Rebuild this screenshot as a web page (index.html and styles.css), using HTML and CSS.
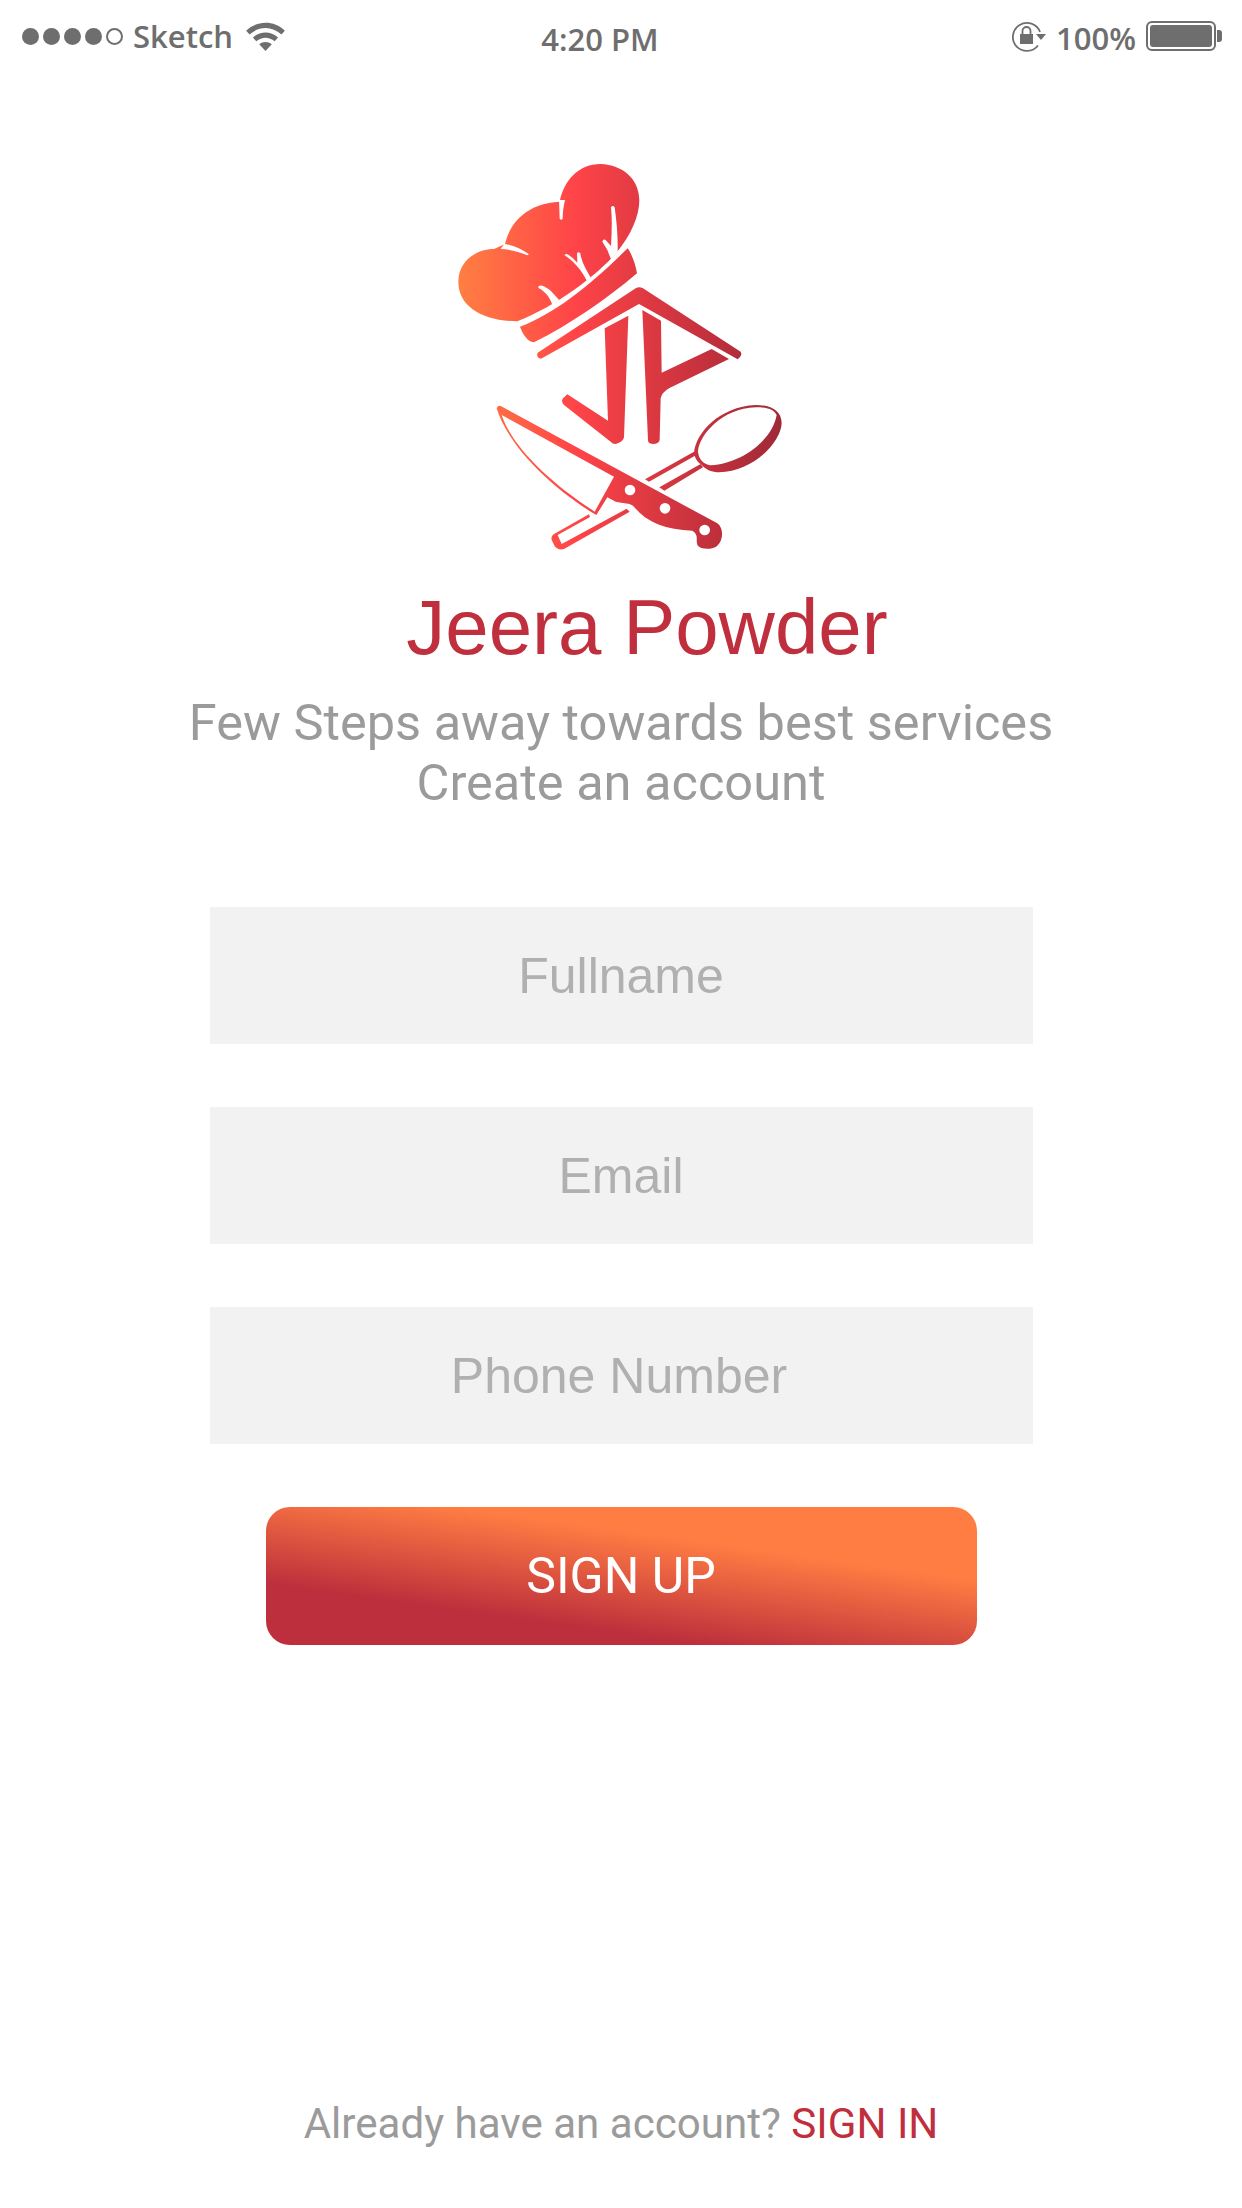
FILE: index.html
```html
<!DOCTYPE html>
<html lang="en">
<head>
<meta charset="utf-8">
<title>Jeera Powder</title>
<link rel="stylesheet" href="styles.css">
</head>
<body>
<div class="page">
  <header class="status">
    <div class="status-left">
      <div class="dots"><i></i><i></i><i></i><i></i><i class="off"></i></div>
      <span class="carrier">Sketch</span>
      <svg class="wifi" viewBox="0 0 40 30"><path d="M0 9C11-2 29-2 40 9l-3.500 4C27 4 13 4 3.500 13z M7 16c8-7 18-7 26 0l-3.500 4c-6-5-13-5-19 0z M13.500 23c4-3 9-3 13 0L20 30z" fill="#6e6e6e"/></svg>
    </div>
    <div class="status-time">4:20 PM</div>
    <div class="status-right">
      <svg class="lock" viewBox="0 0 38 32"><path d="M31 12A14 14 0 1 0 29 25.500" fill="none" stroke="#6e6e6e" stroke-width="1.800"/><path d="M27 14h10l-5 6z" fill="#6e6e6e"/><rect x="11" y="14" width="13" height="10" fill="#6e6e6e"/><path d="M13.500 14v-3a4 4 0 0 1 8 0v3" fill="none" stroke="#6e6e6e" stroke-width="1.800"/></svg>
      <span class="percent">100%</span>
      <div class="battery"><div class="battery-fill"></div></div>
      <div class="battery-nub"></div>
    </div>
  </header>

  <svg class="logo" viewBox="0 0 1080 1230">
    <defs>
      <linearGradient id="g1" gradientUnits="userSpaceOnUse" x1="50" y1="0" x2="1040" y2="0">
        <stop offset="0" stop-color="#ff8042"/>
        <stop offset=".36" stop-color="#ff4448"/>
        <stop offset=".8" stop-color="#bd2f3c"/>
        <stop offset="1" stop-color="#9c2a36"/>
      </linearGradient>
      <linearGradient id="g2" gradientUnits="userSpaceOnUse" x1="-70" y1="0" x2="920" y2="0">
        <stop offset="0" stop-color="#ff8042"/>
        <stop offset=".36" stop-color="#ff4448"/>
        <stop offset=".8" stop-color="#bd2f3c"/>
        <stop offset="1" stop-color="#9c2a36"/>
      </linearGradient>
    </defs>
    <path fill="url(#g1)" d="M235 514C130 512 58 470 58 395C58 335 110 297 165 297L198 282C215 210 270 160 362 155C375 90 420 42 485 42C550 45 600 85 601 150C601 200 575 255 535 305C480 370 360 465 235 514Z"/>
    <g fill="#fff">
      <path d="M196 281C225 287 250 298 270 313L265 316C240 305 215 298 185 297Z"/>
      <path d="M360 150L362 206Q366 212 371 206C371 190 373 170 378 150Z"/>
      <path d="M516 172Q521 164 527 172C533 215 537 260 536 305L516 328L505 300L490 275Q492 266 500 270L516 288C518 250 520 210 516 172Z"/>
      <path d="M376 315Q382 310 388 314C398 320 406 328 415 338L414 310Q418 303 424 310C426 330 440 358 455 382L445 395C428 360 405 335 376 315Z"/>
      <path d="M298 410Q302 405 310 407C330 413 348 435 360 450L340 465C335 445 318 423 298 414Z"/>
    </g>
    <path fill="url(#g1)" d="M243 530C350 490 460 400 566 295C580 315 590 345 594 370C500 450 390 525 285 577C265 575 250 550 243 530Z"/>
    <path fill="url(#g1)" d="M296 608L590 415Q600 408 612 415L905 605Q912 615 896 628L600 462L306 626Q290 622 296 608Z"/>
    <path fill="url(#g1)" d="M497 535L568 497L555 862Q553 876 530 882Q520 882 515 875L375 765Q365 755 372 745L385 733L507 812Z"/>
    <path fill="url(#g1)" d="M610 480L666 512L668 668L818 597L870 627L690 715Q668 728 665 745L662 870Q660 881 645 882Q626 882 627 870Z"/>
    <g transform="translate(120 690)">
      <path fill="url(#g2)" fill-rule="evenodd" d="M53 85Q55 75 65 78L715 430C735 445 733 480 715 497C700 510 665 510 655 495C650 475 660 465 640 452C560 450 500 425 465 380C455 368 430 370 410 365L385 352L352 405L343 400C200 310 85 190 53 85ZM68 105C100 200 210 305 347 395L405 290Z"/>
      <circle cx="453" cy="330" r="16" fill="#fff"/>
      <circle cx="558" cy="385" r="16" fill="#fff"/>
      <circle cx="677" cy="450" r="16" fill="#fff"/>
      <path fill="url(#g2)" fill-rule="evenodd" d="M645 218C650 160 720 80 830 75C880 75 908 95 908 130C905 190 820 275 720 277C700 277 680 270 665 252C655 245 648 235 645 218ZM657 215C660 238 672 252 695 256C790 250 880 180 893 105C885 90 870 82 830 82C730 85 660 165 657 215Z"/>
      <path fill="url(#g2)" d="M645 215L498 298L510 305L652 225Z"/>
      <path fill="url(#g2)" d="M541 322L665 252L672 262L556 332Z"/>
      <path fill="url(#g2)" d="M330 403L225 462Q215 470 218 480L228 500Q240 512 255 507L452 395L443 386L248 492L236 465L333 411Z"/>
    </g>
  </svg>

  <h1 class="title">Jeera Powder</h1>
  <p class="subtitle">Few Steps away towards best services<br>Create an account</p>

  <form class="form">
    <div class="field">Fullname</div>
    <div class="field">Email</div>
    <div class="field field-phone">Phone Number</div>
    <button class="signup" type="button">SIGN UP</button>
  </form>

  <footer class="footer">Already have an account? <a class="signin">SIGN IN</a></footer>
</div>
</body>
</html>
```
FILE: styles.css
```css
* { box-sizing: border-box; }
html, body { margin: 0; padding: 0; background: #fff; }
.page {
  width: 1242px;
  height: 2208px;
  display: flex;
  flex-direction: column;
  align-items: center;
  overflow: hidden;
}
.status {
  width: 100%;
  height: 76px;
  padding: 20px 20px 0 22px;
  display: grid;
  grid-template-columns: 1fr auto 1fr;
  align-items: start;
  font-family: "Open Sans", sans-serif;
  font-weight: 600;
  font-size: 31px;
  line-height: 32px;
  color: #6e6e6e;
}
.status-left, .status-right { display: flex; align-items: center; height: 32px; }
.status-right { justify-content: flex-end; }
.dots { display: flex; gap: 4px; }
.dots i { width: 17px; height: 17px; border-radius: 50%; background: #6e6e6e; }
.dots i.off { background: none; border: 2px solid #6e6e6e; }
.carrier { margin-left: 10px; }
.wifi { width: 39px; height: 29px; margin-left: 13px; }
.status-time { padding-top: 3px; margin-right: 44px; }
.lock { width: 38px; height: 32px; margin-right: 3px; }
.percent { margin-left: 6px; padding-top: 3px; }
.battery {
  width: 70px;
  height: 30px;
  margin-left: 10px;
  border: 2px solid #6e6e6e;
  border-radius: 6px;
  padding: 2px;
}
.battery-fill { width: 100%; height: 100%; background: #6e6e6e; border-radius: 3px; }
.battery-nub { width: 5px; height: 12px; background: #6e6e6e; border-radius: 0 3px 3px 0; margin-left: 1px; }

.logo { width: 360px; height: 410px; margin-top: 74px; margin-left: -4px; }
.title {
  margin: 20px 0 0;
  padding-left: 52px;
  font-family: "Liberation Sans", sans-serif;
  font-weight: 400;
  font-size: 78px;
  line-height: 94px;
  color: #c02f3e;
}
.subtitle {
  margin: 19px 0 0;
  text-align: center;
  font-family: Roboto, sans-serif;
  font-size: 50.500px;
  line-height: 60px;
  color: #9b9b9b;
}
.form {
  margin-top: 94px;
  display: flex;
  flex-direction: column;
  align-items: center;
  gap: 63px;
}
.field {
  width: 823px;
  height: 137px;
  background: #f2f2f2;
  display: flex;
  align-items: center;
  justify-content: center;
  font-family: "Liberation Sans", sans-serif;
  font-size: 50px;
  color: #b0b0b0;
}
.field-phone { padding-right: 4px; }
.signup {
  width: 711px;
  height: 138px;
  border: 0;
  border-radius: 24px;
  background: linear-gradient(188deg, #ff7d43 31%, #bd2f3c 74%);
  color: #fff;
  font-family: Roboto, sans-serif;
  font-size: 50px;
  padding: 0;
}
.footer {
  margin-top: auto;
  margin-bottom: 55px;
  font-family: Roboto, sans-serif;
  font-size: 42.100px;
  line-height: 58px;
  color: #9b9b9b;
}
.signin { color: #c02f3e; }
```
